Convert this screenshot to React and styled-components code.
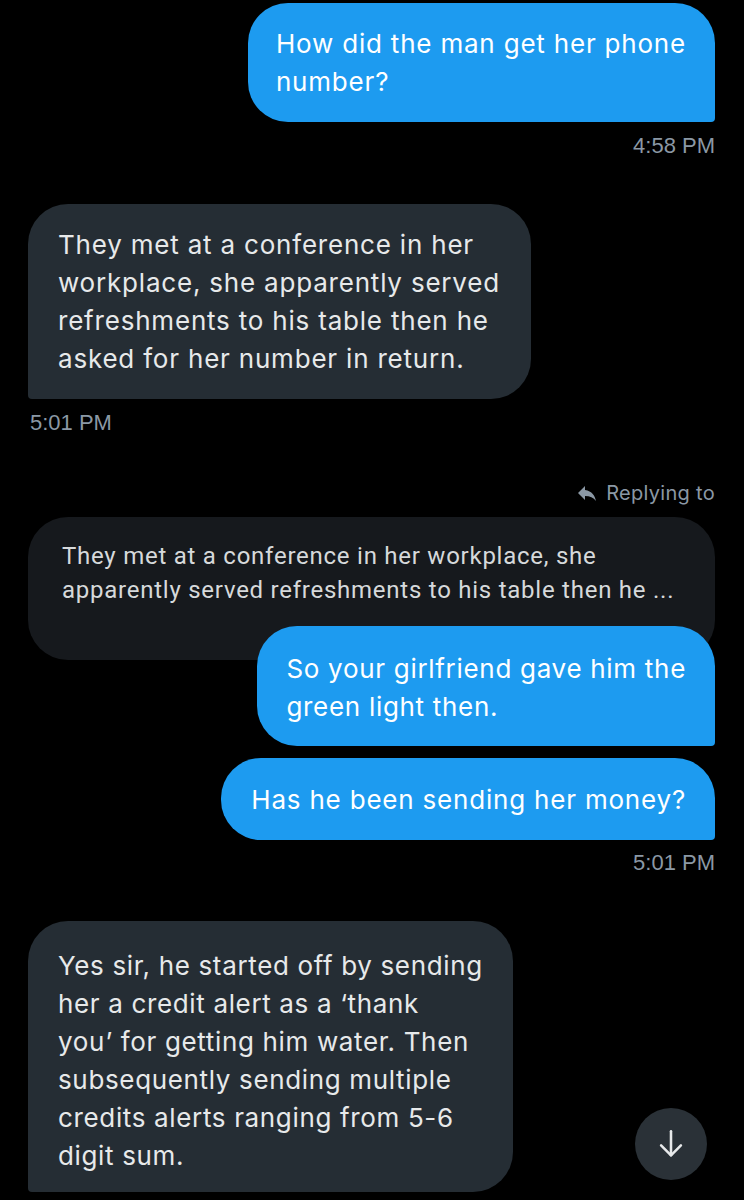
import React from 'react';
import styled, { createGlobalStyle } from 'styled-components';

const GlobalStyle = createGlobalStyle`
  html, body {
    margin: 0;
    padding: 0;
    background: #000;
  }
  * {
    box-sizing: border-box;
  }
`;

const Page = styled.div`
  width: 744px;
  min-height: 1200px;
  background: #000;
  padding: 3px 29px 0 28px;
  display: flex;
  flex-direction: column;
  position: relative;
  overflow: hidden;
  font-family: Inter, "Noto Sans", sans-serif;
`;

const Row = styled.div`
  display: flex;
  justify-content: ${props => (props.mine ? 'flex-end' : 'flex-start')};
  margin-top: ${props => props.gap || 0}px;
  position: relative;
  z-index: 1;
`;

const Bubble = styled.div`
  background: ${props => (props.mine ? '#1d9bf0' : '#252d34')};
  color: ${props => (props.mine ? '#fff' : '#e7e9ea')};
  font-size: 26px;
  letter-spacing: ${props => props.spacing || '0.8px'};
  line-height: 38px;
  white-space: nowrap;
  padding: ${props => props.pad || '22px 29px 21px 30px'};
  border-radius: ${props => (props.mine ? '40px 40px 4px 40px' : '40px 40px 40px 4px')};
`;

const Time = styled.div`
  color: #8b98a5;
  font-family: "Liberation Sans", Arial, sans-serif;
  font-size: 22px;
  line-height: 24px;
  margin-top: ${props => props.gap || 12}px;
  text-align: ${props => (props.mine ? 'right' : 'left')};
  padding-left: ${props => (props.mine ? 0 : 2)}px;
`;

const ReplyLabel = styled.div`
  display: flex;
  align-items: center;
  justify-content: flex-end;
  gap: 7px;
  margin-top: 46px;
  color: #8b98a5;
  font-size: 20px;
  letter-spacing: 0.3px;
  line-height: 24px;
`;

const Quote = styled.div`
  background: #16191d;
  color: #d6d9db;
  font-family: Roboto, "Noto Sans", sans-serif;
  font-size: 24px;
  letter-spacing: 0.75px;
  line-height: 34px;
  border-radius: 40px;
  padding: 22px 30px 53px 34px;
  margin-top: 12px;
  white-space: nowrap;
`;

const Overlap = styled.div`
  margin-top: -34px;
`;

const ScrollButton = styled.button`
  position: absolute;
  left: 635px;
  top: 1108px;
  width: 72px;
  height: 72px;
  border-radius: 50%;
  border: none;
  background: #2a3137;
  display: flex;
  align-items: center;
  justify-content: center;
  padding: 0;
  z-index: 2;
`;

const ReplyIcon = () => (
  <svg width="24" height="24" viewBox="0 0 24 24" fill="#8b98a5">
    <path d="M10 9V5l-7 7 7 7v-4.1c5 0 8.5 1.6 11 5.1-1-5-4-10-11-11z" />
  </svg>
);

const DownArrow = () => (
  <svg width="34" height="34" viewBox="0 0 24 24" fill="none" stroke="#e7e9ea" strokeWidth="1.8" strokeLinecap="round" strokeLinejoin="round">
    <path d="M12 3v17" />
    <path d="M5 13l7 7 7-7" />
  </svg>
);

const Lines = ({ lines }) =>
  lines.map((line, i) => (
    <React.Fragment key={i}>
      {line}
      {i < lines.length - 1 && <br />}
    </React.Fragment>
  ));

export default function App() {
  return (
    <>
      <GlobalStyle />
      <Page>
        <Row mine>
          <Bubble mine pad="22px 29px 21px 28px">
            <Lines lines={['How did the man get her phone', 'number?']} />
          </Bubble>
        </Row>
        <Time mine>4:58 PM</Time>

        <Row gap={46}>
          <Bubble pad="22px 31px 21px 30px">
            <Lines
              lines={[
                'They met at a conference in her',
                'workplace, she apparently served',
                'refreshments to his table then he',
                'asked for her number in return.',
              ]}
            />
          </Bubble>
        </Row>
        <Time>5:01 PM</Time>

        <ReplyLabel>
          <ReplyIcon />
          Replying to
        </ReplyLabel>
        <Quote>
          <Lines
            lines={[
              'They met at a conference in her workplace, she',
              'apparently served refreshments to his table then he ...',
            ]}
          />
        </Quote>
        <Overlap>
          <Row mine>
            <Bubble mine pad="24px 29px 20px 29px" spacing="0.7px">
              <Lines lines={['So your girlfriend gave him the', 'green light then.']} />
            </Bubble>
          </Row>
        </Overlap>
        <Row mine gap={12}>
          <Bubble mine pad="23px 29px 21px 30px">Has he been sending her money?</Bubble>
        </Row>
        <Time mine gap={11}>5:01 PM</Time>

        <Row gap={46}>
          <Bubble spacing="0.65px" pad="26px 30px 17px 30px">
            <Lines
              lines={[
                'Yes sir, he started off by sending',
                'her a credit alert as a \u2018thank',
                'you\u2019 for getting him water. Then',
                'subsequently sending multiple',
                'credits alerts ranging from 5-6',
                'digit sum.',
              ]}
            />
          </Bubble>
        </Row>

        <ScrollButton aria-label="Scroll to bottom">
          <DownArrow />
        </ScrollButton>
      </Page>
    </>
  );
}
